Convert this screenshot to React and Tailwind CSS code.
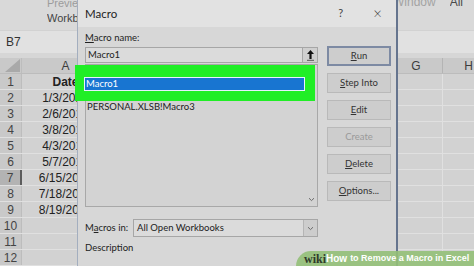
import React from "react";

const rows = [
  { n: 1, v: "Date", bold: true },
  { n: 2, v: "1/3/2017" },
  { n: 3, v: "2/6/2017" },
  { n: 4, v: "3/8/2017" },
  { n: 5, v: "4/3/2017" },
  { n: 6, v: "5/7/2017" },
  { n: 7, v: "6/15/2017" },
  { n: 8, v: "7/18/2017" },
  { n: 9, v: "8/19/2017" },
  { n: 10, v: "" },
  { n: 11, v: "" },
  { n: 12, v: "" },
];

const buttons = [
  { label: "Run", u: 0, main: true },
  { label: "Step Into", u: 0 },
  { label: "Edit", u: 0 },
  { label: "Create", u: -1, off: true },
  { label: "Delete", u: 0 },
  { label: "Options...", u: 0 },
];

const Under = ({ text, i }) =>
  i < 0 ? (
    text
  ) : (
    <>
      {text.slice(0, i)}
      <span className="underline underline-offset-1">{text[i]}</span>
      {text.slice(i + 1)}
    </>
  );

const Chevron = () => (
  <svg width="7" height="5" viewBox="0 0 7 5">
    <path d="M1 1.2 L3.5 3.6 L6 1.2" fill="none" stroke="#6a6a6a" strokeWidth="1" />
  </svg>
);

const Sheet = () => (
  <div className="flex flex-col w-full h-full font-['Liberation_Sans',sans-serif]">
    {/* ribbon */}
    <div className="h-[30px] bg-[#d9d9d9] flex text-[11px]">
      <div className="ml-[47px] w-[30px] flex flex-col leading-none whitespace-nowrap">
        <span className="block w-[30px] text-[#9c9c9c] h-[7px] overflow-hidden leading-[7px]">Preview</span>
        <span className="block w-[30px] overflow-hidden text-[#444] mt-[6px]">Workbook</span>
      </div>
      <div className="ml-auto mr-[11px] flex gap-[14px] leading-none text-[12px]">
        <span className="text-[#a3a3a3] h-[8px] overflow-hidden flex items-end">Window</span>
        <span className="text-[#4a4a4a] h-[8px] overflow-hidden flex items-end">All</span>
      </div>
    </div>
    {/* formula bar */}
    <div className="h-[22px] bg-[#e1e1e1] flex items-center mt-[1px]">
      <span className="ml-[6px] text-[12px] text-[#333]">B7</span>
    </div>
    <div className="h-[5px] bg-[#d6d6d6]" />
    {/* column headers */}
    <div className="h-[16px] flex bg-[#c9c9c9] border-b border-[#bcbcbc] text-[12px] text-[#3c3c3c]">
      <div className="w-[22px] flex items-end justify-end border-r border-[#bdbdbd]">
        <svg width="15" height="13" viewBox="0 0 15 13" className="mb-[1px] mr-[1px]">
          <polygon points="15,0 15,13 0,13" fill="#a9a9a9" />
        </svg>
      </div>
      <div className="w-[88px] flex items-center justify-center border-r border-[#bdbdbd]">A</div>
      <div className="w-[280px] border-r border-[#bdbdbd]" />
      <div className="w-[53px] flex items-center justify-center border-r border-[#b4b4b4]">G</div>
      <div className="flex-1 flex items-center justify-end pr-[1px]">H</div>
    </div>
    {/* rows */}
    {rows.map((r) => (
      <div key={r.n} className="h-[16px] flex border-b border-[#e0e0e0] text-[12px] shrink-0">
        <div
          className={
            "w-[22px] flex items-center justify-center text-[#444] " +
            (r.n === 7 ? "bg-[#b3b3b3] border-r-2 border-[#5c5c5c]" : "bg-[#c9c9c9] border-r border-[#bdbdbd]")
          }
        >
          {r.n}
        </div>
        <div className={"w-[88px] flex items-center justify-center text-[#222] border-r border-[#e0e0e0] " + (r.bold ? "font-bold" : "")}>
          {r.v}
        </div>
        <div className="w-[280px] border-r border-[#e0e0e0]" />
        <div className="w-[53px] border-r border-[#e0e0e0]" />
        <div className="flex-1" />
      </div>
    ))}
  </div>
);

const Dialog = () => (
  <div className="absolute left-[77px] top-0 w-[321px] h-[270px] bg-[#d7d7d7] border-l border-[#a3aebf] border-r-2 border-r-[#65748e] flex flex-col font-['Lato',sans-serif] text-[9.5px] text-[#222]">
    <div className="h-[27px] bg-[#e2e2e2] flex items-center shrink-0">
      <span className="ml-[7px] text-[11.5px]">Macro</span>
      <span className="ml-auto text-[11px] text-[#444]">?</span>
      <span className="ml-[30px] mr-[14px] text-[15px] leading-none text-[#333] font-light">×</span>
    </div>
    <div className="flex pl-[7px]">
      <div className="w-[233px] flex flex-col">
        <div className="h-[12px] mt-[5px] flex items-center leading-none">
          <Under text="Macro name:" i={0} />
        </div>
        <div className="h-[16px] mt-[3px] flex">
          <div className="flex-1 bg-[#dbdbdb] border border-[#a6a6a6] flex items-center pl-[2px]">Macro1</div>
          <div className="w-[15px] bg-[#cfcfcf] border border-l-0 border-[#a6a6a6] flex items-center justify-center">
            <svg width="9" height="12" viewBox="0 0 9 12">
              <path d="M4.5 1 L8 5 L5.6 5 L5.6 10 L3.4 10 L3.4 5 L1 5 Z" fill="#111" />
              <rect x="1" y="10.8" width="7" height="1" fill="#555" />
            </svg>
          </div>
        </div>
        <div className="relative h-[143px] mt-[1px] bg-[#d3d3d3] border border-[#a8a8a8] flex">
          <div className="flex-1 flex flex-col pt-[36px] pl-[1px]">
            <div className="h-[12px] flex items-center leading-none">PERSONAL.XLSB!Macro3</div>
          </div>
          <div className="w-[12px] flex flex-col justify-end items-center pb-[4px]">
            <Chevron />
          </div>
          <div className="absolute left-[-11px] top-0 w-[240px] h-[36px] bg-[#20ee26] flex flex-col">
            <div className="ml-[9px] mt-[12px] w-[221px] h-[14px] bg-[#1875d1] border border-[#e8f0ff] flex items-center pl-[1px] text-white">
              Macro1
            </div>
          </div>
        </div>
        <div className="h-[18px] mt-[12px] flex items-center">
          <span className="w-[48px] shrink-0">
            <Under text="Macros in:" i={1} />
          </span>
          <div className="flex-1 h-full flex bg-[#dbdbdb] border border-[#a6a6a6]">
            <div className="flex-1 flex items-center pl-[3px]">All Open Workbooks</div>
            <div className="w-[14px] bg-[#cdcdcd] border-l border-[#b5b5b5] flex items-center justify-center">
              <Chevron />
            </div>
          </div>
        </div>
        <div className="h-[12px] mt-[5px] flex items-center">Description</div>
      </div>
      <div className="w-[64px] ml-[9px] mt-[19px] flex flex-col gap-[7px]">
        {buttons.map((b) => (
          <div
            key={b.label}
            className={
              "h-[20px] flex items-center justify-center bg-[#cdcdcd] " +
              (b.main ? "border-2 border-[#7d8aa3]" : "border border-[#b9b9b9]") +
              (b.off ? " text-[#9a9a9a]" : " text-[#333]")
            }
          >
            <Under text={b.label} i={b.u} />
          </div>
        ))}
      </div>
    </div>
  </div>
);

const Watermark = () => (
  <div className="absolute right-0 bottom-0 w-[178px] h-[15px] rounded-tl-[15px] bg-[#94c078]/90 flex items-center pl-[8px] whitespace-nowrap text-[9px] leading-none font-['Liberation_Sans',sans-serif]">
    <span className="font-['Liberation_Serif',serif] font-bold text-[12px] text-[#2f3a2a]">wiki</span>
    <span className="font-bold text-white text-[10px]">How</span>
    <span className="ml-[3px] font-bold text-white">to Remove a Macro in Excel</span>
  </div>
);

export default function App() {
  return (
    <div className="relative w-[474px] h-[266px] overflow-hidden bg-[#d2d2d2]">
      <Sheet />
      <Dialog />
      <Watermark />
    </div>
  );
}
